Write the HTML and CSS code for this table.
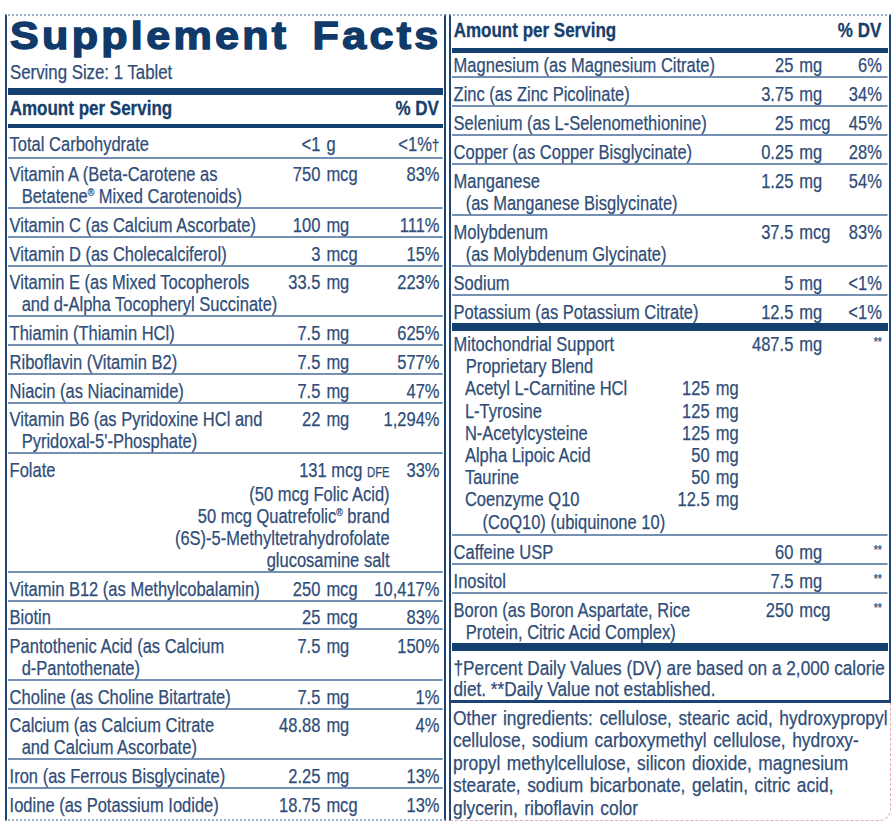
FILE: index.html
```html
<!DOCTYPE html>
<html lang="en">
<head>
<meta charset="utf-8">
<title>Supplement Facts</title>
<link rel="stylesheet" href="styles.css">
</head>
<body>
<div class="label">
  <section class="panel panel-left">
    <h1 class="title">Supplement Facts</h1>
    <div class="serving">Serving Size: 1 Tablet</div>
    <div class="bar bar-thick"></div>
    <div class="head"><span>Amount per Serving</span><span>% DV</span></div>
    <div class="bar bar-med"></div>

    <div class="row"><span class="name">Total Carbohydrate</span><span class="num">&lt;1</span><span class="unit">g</span><span class="dv">&lt;1%<span class="dag">†</span></span></div>
    <div class="row"><span class="name">Vitamin A (Beta-Carotene as<br>Betatene<sup>®</sup> Mixed Carotenoids)</span><span class="num">750</span><span class="unit">mcg</span><span class="dv">83%</span></div>
    <div class="row"><span class="name">Vitamin C (as Calcium Ascorbate)</span><span class="num">100</span><span class="unit">mg</span><span class="dv">111%</span></div>
    <div class="row"><span class="name">Vitamin D (as Cholecalciferol)</span><span class="num">3</span><span class="unit">mcg</span><span class="dv">15%</span></div>
    <div class="row"><span class="name">Vitamin E (as Mixed Tocopherols<br>and d-Alpha Tocopheryl Succinate)</span><span class="num">33.5</span><span class="unit">mg</span><span class="dv">223%</span></div>
    <div class="row"><span class="name">Thiamin (Thiamin HCl)</span><span class="num">7.5</span><span class="unit">mg</span><span class="dv">625%</span></div>
    <div class="row"><span class="name">Riboflavin (Vitamin B2)</span><span class="num">7.5</span><span class="unit">mg</span><span class="dv">577%</span></div>
    <div class="row"><span class="name">Niacin (as Niacinamide)</span><span class="num">7.5</span><span class="unit">mg</span><span class="dv">47%</span></div>
    <div class="row"><span class="name">Vitamin B6 (as Pyridoxine HCl and<br>Pyridoxal-5'-Phosphate)</span><span class="num">22</span><span class="unit">mg</span><span class="dv">1,294%</span></div>
    <div class="row row-folate">
      <span class="name">Folate</span>
      <span class="folate-amt">131 mcg <span class="dfe">DFE</span><br>(50 mcg Folic Acid)<br>50 mcg Quatrefolic<sup>®</sup> brand<br>(6S)-5-Methyltetrahydrofolate<br>glucosamine salt</span>
      <span class="dv">33%</span>
    </div>
    <div class="row"><span class="name">Vitamin B12 (as Methylcobalamin)</span><span class="num">250</span><span class="unit">mcg</span><span class="dv">10,417%</span></div>
    <div class="row"><span class="name">Biotin</span><span class="num">25</span><span class="unit">mcg</span><span class="dv">83%</span></div>
    <div class="row"><span class="name">Pantothenic Acid (as Calcium<br>d-Pantothenate)</span><span class="num">7.5</span><span class="unit">mg</span><span class="dv">150%</span></div>
    <div class="row"><span class="name">Choline (as Choline Bitartrate)</span><span class="num">7.5</span><span class="unit">mg</span><span class="dv">1%</span></div>
    <div class="row"><span class="name">Calcium (as Calcium Citrate<br>and Calcium Ascorbate)</span><span class="num">48.88</span><span class="unit">mg</span><span class="dv">4%</span></div>
    <div class="row"><span class="name">Iron (as Ferrous Bisglycinate)</span><span class="num">2.25</span><span class="unit">mg</span><span class="dv">13%</span></div>
    <div class="row row-last"><span class="name">Iodine (as Potassium Iodide)</span><span class="num">18.75</span><span class="unit">mcg</span><span class="dv">13%</span></div>
  </section>

  <div class="col-right">
    <section class="panel panel-right">
      <div class="head head-right"><span>Amount per Serving</span><span>% DV</span></div>
      <div class="bar bar-head"></div>

      <div class="row row-first"><span class="name">Magnesium (as Magnesium Citrate)</span><span class="num">25</span><span class="unit">mg</span><span class="dv">6%</span></div>
      <div class="row"><span class="name">Zinc (as Zinc Picolinate)</span><span class="num">3.75</span><span class="unit">mg</span><span class="dv">34%</span></div>
      <div class="row"><span class="name">Selenium (as L-Selenomethionine)</span><span class="num">25</span><span class="unit">mcg</span><span class="dv">45%</span></div>
      <div class="row"><span class="name">Copper (as Copper Bisglycinate)</span><span class="num">0.25</span><span class="unit">mg</span><span class="dv">28%</span></div>
      <div class="row"><span class="name">Manganese<br>(as Manganese Bisglycinate)</span><span class="num">1.25</span><span class="unit">mg</span><span class="dv">54%</span></div>
      <div class="row"><span class="name">Molybdenum<br>(as Molybdenum Glycinate)</span><span class="num">37.5</span><span class="unit">mcg</span><span class="dv">83%</span></div>
      <div class="row"><span class="name">Sodium</span><span class="num">5</span><span class="unit">mg</span><span class="dv">&lt;1%</span></div>
      <div class="row row-nb"><span class="name">Potassium (as Potassium Citrate)</span><span class="num">12.5</span><span class="unit">mg</span><span class="dv">&lt;1%</span></div>

      <div class="bar bar-big"></div>

      <div class="row mito">
        <span class="name">Mitochondrial Support<br>Proprietary Blend</span>
        <span class="num">487.5</span><span class="unit">mg</span><span class="dv"><span class="ast">**</span></span>
        <div class="blend">
          <span class="b-name">Acetyl L-Carnitine HCl</span><span class="b-num">125</span><span class="b-unit">mg</span>
          <span class="b-name">L-Tyrosine</span><span class="b-num">125</span><span class="b-unit">mg</span>
          <span class="b-name">N-Acetylcysteine</span><span class="b-num">125</span><span class="b-unit">mg</span>
          <span class="b-name">Alpha Lipoic Acid</span><span class="b-num">50</span><span class="b-unit">mg</span>
          <span class="b-name">Taurine</span><span class="b-num">50</span><span class="b-unit">mg</span>
          <span class="b-name">Coenzyme Q10<br><span class="b-sub">(CoQ10) (ubiquinone 10)</span></span><span class="b-num">12.5</span><span class="b-unit">mg</span>
        </div>
      </div>
      <div class="row"><span class="name">Caffeine USP</span><span class="num">60</span><span class="unit">mg</span><span class="dv"><span class="ast">**</span></span></div>
      <div class="row"><span class="name">Inositol</span><span class="num">7.5</span><span class="unit">mg</span><span class="dv"><span class="ast">**</span></span></div>
      <div class="row row-nb"><span class="name">Boron (as Boron Aspartate, Rice<br>Protein, Citric Acid Complex)</span><span class="num">250</span><span class="unit">mcg</span><span class="dv"><span class="ast">**</span></span></div>

      <div class="bar bar-big"></div>

      <p class="foot">†Percent Daily Values (DV) are based on a 2,000 calorie<br>diet. **Daily Value not established.</p>
    </section>

    <div class="other">
      <p class="other-text">Other ingredients: cellulose, stearic acid, hydroxypropyl<br>cellulose, sodium carboxymethyl cellulose, hydroxy-<br>propyl methylcellulose, silicon dioxide, magnesium<br>stearate, sodium bicarbonate, gelatin, citric acid,<br>glycerin, riboflavin color</p>
    </div>
  </div>
</div>
</body>
</html>
```

FILE: styles.css
```css
* {
  box-sizing: border-box;
  margin: 0;
  padding: 0;
}

html, body {
  background: #ffffff;
}

body {
  font-family: "Liberation Sans", Arial, sans-serif;
  font-size: 20.5px;
  line-height: 22px;
  color: #2f4d78;
  -webkit-text-stroke: 0.25px #2f4d78;
}

.label {
  display: flex;
  align-items: stretch;
  gap: 3px;
  padding: 14px 0 0 5px;
  width: 896px;
  overflow: hidden;
}

.panel {
  border-left: 2px solid #1c4576;
  border-right: 2px solid #1c4576;
  border-top: 2px dotted #9aadc6;
  overflow: hidden;
}

.panel-left {
  width: 441px;
  height: 807px;
  border-bottom: 2px dotted #9aadc6;
  display: flex;
  flex-direction: column;
}

.col-right {
  width: 442px;
  display: flex;
  flex-direction: column;
}

.panel-right {
  border-bottom: 3px solid #1c4576;
}

/* title block */
.title {
  font-weight: 700;
  font-size: 39px;
  line-height: 40px;
  height: 40px;
  flex: none;
  color: #0f3a6a;
  letter-spacing: 3px;
  word-spacing: 7px;
  -webkit-text-stroke: 1.4px #0f3a6a;
  white-space: nowrap;
  margin-left: 3px;
  transform: scaleX(1.104);
  transform-origin: left center;
}

.serving {
  margin: 5px 0 0 3px;
  line-height: 22px;
  white-space: nowrap;
  transform: scaleX(0.82);
  transform-origin: left center;
}

.bar {
  flex: none;
  background: #14406f;
  margin: 0 1px;
}

.bar-thick {
  height: 7px;
  margin-top: 5px;
}

.bar-med {
  height: 4px;
}

.bar-head {
  height: 5px;
}

.bar-big {
  height: 8px;
}

/* condensed text rows: laid out wide, then narrowed horizontally */
.head {
  display: flex;
  flex: none;
  justify-content: space-between;
  width: 512px;
  font-weight: 700;
  font-size: 20px;
  color: #173f6d;
  -webkit-text-stroke: 0.3px #173f6d;
  padding: 2px 5px 5px 2px;
  margin: 0 1px;
  white-space: nowrap;
  transform: scaleX(0.85);
  transform-origin: left center;
}

.head-right {
  width: 513px;
  padding: 3px 8px 7px 2px;
}

.row {
  display: grid;
  flex: none;
  grid-template-columns: minmax(0, 1fr) 62px 55px 93px;
  width: 540px;
  margin: 0 1px;
  padding: 4.7px 4px 0 2px;
  border-bottom: 2px solid #7690b3;
  white-space: nowrap;
  transform: scaleX(0.805);
  transform-origin: left top;
}

.panel-right .row {
  grid-template-columns: minmax(0, 1fr) 62px 55px 55px;
  width: 541px;
  padding: 5px 7px 0 2px;
}

.panel-right .row-first {
  padding-top: 1px;
}

.row-last {
  border-bottom: none;
  flex: 1;
}

.panel-right .row-nb {
  border-bottom: none;
}

.name {
  padding-left: 15px;
  text-indent: -15px;
}

.num {
  text-align: right;
}

.unit {
  padding-left: 7.5px;
}

.dv {
  text-align: right;
}

.dag {
  font-size: 17px;
}

sup {
  font-size: 11px;
  line-height: 0;
  vertical-align: 7px;
}

.row-folate {
  display: flex;
}

.row-folate .name {
  flex: 1;
}

.folate-amt {
  text-align: right;
}

.row-folate .dv {
  width: 62px;
}

.dfe {
  font-size: 14px;
}

.ast {
  font-size: 13px;
  vertical-align: 5px;
  line-height: 0;
}

/* proprietary blend */
.panel-right .mito {
  line-height: 22.2px;
  padding-top: 2px;
  padding-bottom: 1px;
}

.mito .name {
  grid-column: 1;
  grid-row: 1;
}

.blend {
  grid-column: 1 / 3;
  grid-row: 2;
  display: grid;
  grid-template-columns: 254px 50px 42px;
  padding-left: 14px;
}

.b-num {
  text-align: right;
}

.b-unit {
  padding-left: 7.5px;
}

.b-sub {
  padding-left: 22px;
}

.foot {
  padding: 6px 4px 1px 3px;
  line-height: 21px;
  white-space: nowrap;
  transform: scaleX(0.84);
  transform-origin: left center;
}

/* other ingredients */
.other {
  flex: 1;
  border-left: 2px solid #1c4576;
  border-right: 1.5px dashed #e3aabb;
  border-bottom: 1.5px dashed #e3aabb;
  border-bottom-right-radius: 12px;
  padding: 4px 4px 0 2px;
  overflow: hidden;
}

.other-text {
  line-height: 22.5px;
  white-space: nowrap;
  word-spacing: 2px;
  transform: scaleX(0.848);
  transform-origin: left top;
}
```
